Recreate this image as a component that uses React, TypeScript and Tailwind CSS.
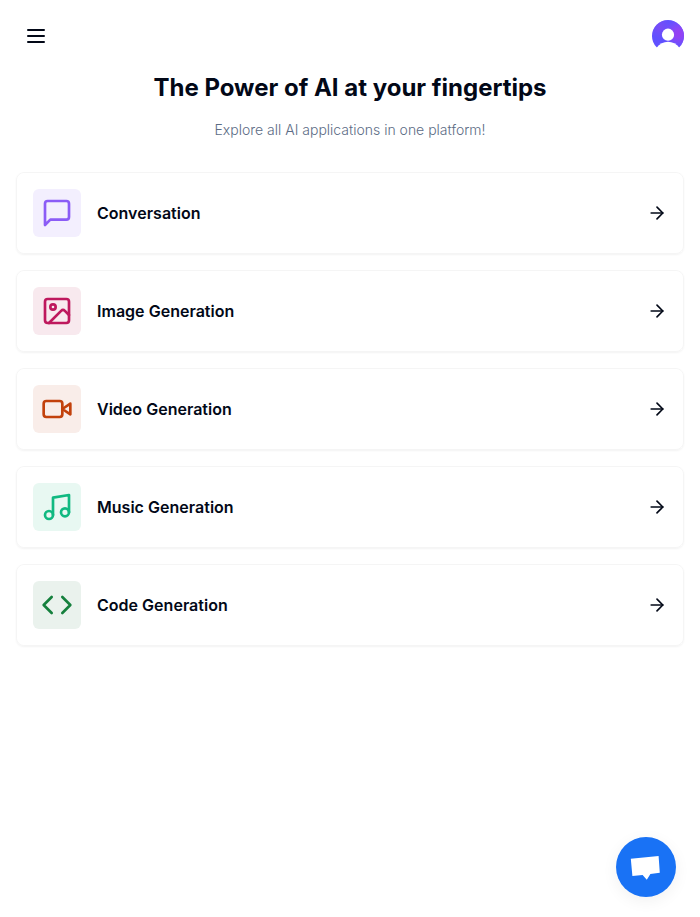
import React from "react";
import { ArrowRight, Code, Music } from "lucide-react";

type IconProps = { className?: string };

function Stroke({ className, children }: { className?: string; children: React.ReactNode }) {
  return (
    <svg
      className={className}
      viewBox="0 0 24 24"
      fill="none"
      stroke="currentColor"
      strokeWidth="2"
      strokeLinecap="round"
      strokeLinejoin="round"
    >
      {children}
    </svg>
  );
}

const Menu = ({ className }: IconProps) => (
  <Stroke className={className}>
    <path d="M4 12h16M4 6h16M4 18h16" />
  </Stroke>
);

const Message = ({ className }: IconProps) => (
  <Stroke className={className}>
    <path d="M21 15a2 2 0 0 1-2 2H7l-4 4V5a2 2 0 0 1 2-2h14a2 2 0 0 1 2 2z" />
  </Stroke>
);

const Picture = ({ className }: IconProps) => (
  <Stroke className={className}>
    <rect x="3" y="3" width="18" height="18" rx="2" />
    <circle cx="9" cy="9" r="2" />
    <path d="m21 15-3.086-3.086a2 2 0 0 0-2.828 0L6 21" />
  </Stroke>
);

const Camera = ({ className }: IconProps) => (
  <Stroke className={className}>
    <path d="m22 8-6 4 6 4V8Z" />
    <rect x="2" y="6" width="14" height="12" rx="2" />
  </Stroke>
);

const tools = [
  { label: "Conversation", icon: Message, color: "text-[#8b5cf6]", bg: "bg-[#f3effe]" },
  { label: "Image Generation", icon: Picture, color: "text-[#be185d]", bg: "bg-[#f8e9ee]" },
  { label: "Video Generation", icon: Camera, color: "text-[#c2410c]", bg: "bg-[#f9ede9]" },
  { label: "Music Generation", icon: Music, color: "text-[#10b981]", bg: "bg-[#e8f8f2]" },
  { label: "Code Generation", icon: Code, color: "text-[#15803d]", bg: "bg-[#eaf2ed]" },
];

export default function App() {
  return (
    <div className="min-h-[917px] bg-white font-['Inter',sans-serif] text-[#020817]">
      <header className="flex items-center justify-between p-4">
        <button className="flex h-10 w-10 items-center justify-center">
          <Menu className="h-6 w-6" />
        </button>
        <svg className="h-8 w-8" viewBox="0 0 32 32">
          <defs>
            <radialGradient id="glow" cx="0.82" cy="0.42" r="0.45">
              <stop offset="0" stopColor="#963ff2" />
              <stop offset="0.3" stopColor="#9044f5" />
              <stop offset="1" stopColor="#8a4af8" stopOpacity="0" />
            </radialGradient>
            <radialGradient id="haze" cx="0.25" cy="0.22" r="0.35">
              <stop offset="0" stopColor="#7a4cf5" />
              <stop offset="1" stopColor="#7a4cf5" stopOpacity="0" />
            </radialGradient>
          </defs>
          <circle cx="16" cy="16" r="16" fill="#6050ff" />
          <circle cx="16" cy="16" r="16" fill="url(#haze)" />
          <circle cx="16" cy="16" r="16" fill="url(#glow)" />
          <circle cx="16" cy="14.7" r="6.1" fill="#fff" />
          <path d="M4.5 27.7C7.5 24 11.5 21.8 16 21.8S24.5 24 27.5 27.7L29 32.5H3Z" fill="#fff" />
        </svg>
      </header>
      <main>
        <div className="mb-8 space-y-4 text-center">
          <h2 className="text-2xl font-bold">The Power of AI at your fingertips</h2>
          <p className="text-sm font-light text-[#5c6c85]">Explore all AI applications in one platform!</p>
        </div>
        <div className="space-y-4 px-4">
          {tools.map(({ label, icon: Icon, color, bg }) => (
            <div
              key={label}
              className="flex items-center justify-between rounded-lg border border-black/[0.04] p-4 shadow-[0_1px_2px_0_rgba(0,0,0,0.05)]"
            >
              <div className="flex items-center gap-x-4">
                <div className={`rounded-md p-2 ${bg}`}>
                  <Icon className={`h-8 w-8 ${color}`} />
                </div>
                <div className="font-semibold tracking-[0.02px]">{label}</div>
              </div>
              <ArrowRight className="h-5 w-5" />
            </div>
          ))}
        </div>
      </main>
      <button className="fixed bottom-5 right-6 flex h-[60px] w-[60px] items-center justify-center rounded-full bg-[#1972f5] shadow-[0_4px_16px_rgba(0,0,0,0.06)]">
        <svg className="h-[60px] w-[60px]" viewBox="0 0 60 60" fill="#fff">
          <path d="M14.8 21.8 42.6 18.9 43.8 35.8 34.4 37 30.8 42.8 26.6 38 16.4 39Z" />
        </svg>
      </button>
    </div>
  );
}
